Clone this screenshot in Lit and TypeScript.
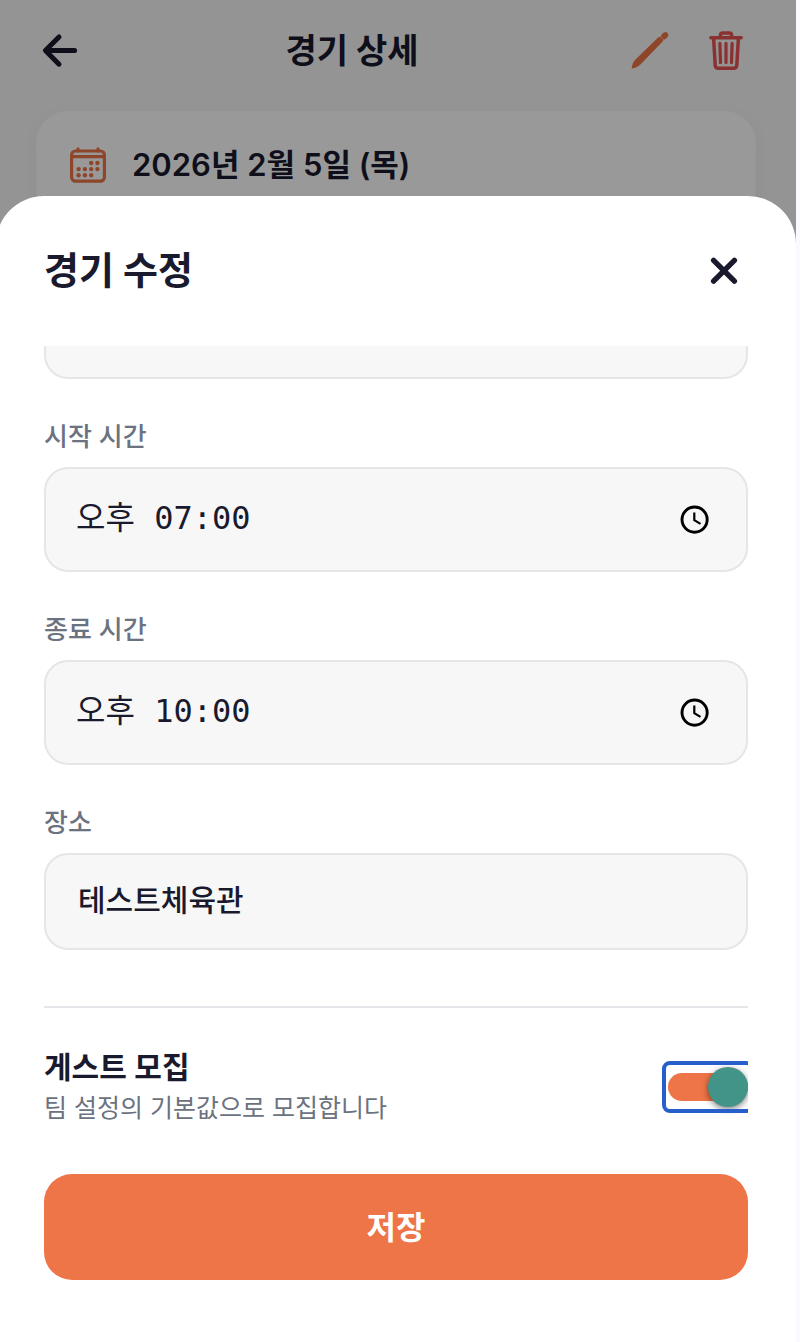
import { LitElement, html, css } from "lit";
import { customElement, query } from "lit/decorators.js";

const clock = html`<svg class="clock" viewBox="0 0 32 32" aria-hidden="true">
  <circle cx="16.6" cy="15.6" r="12.6" fill="none" stroke="#000" stroke-width="2.9" />
  <path d="M16.3 8.4v7.8l6.2 3.7" fill="none" stroke="#000" stroke-width="2.2" />
</svg>`;

@customElement("app-root")
export class AppRoot extends LitElement {
  @query(".body") private body!: HTMLElement;

  static styles = css`
    :host {
      display: block;
      height: 100vh;
      overflow: hidden;
      background: #f9f9ff;
      color: #1a1a2e;
      font-family: Inter, "Noto Sans CJK KR", sans-serif;
    }
    * {
      box-sizing: border-box;
    }
    h1,
    h2,
    p {
      margin: 0;
    }
    button {
      display: flex;
      align-items: center;
      justify-content: center;
      padding: 0;
      border: 0;
      background: none;
      color: inherit;
      font: inherit;
    }
    .shell {
      position: relative;
      height: 100%;
      margin: 0 4px 0 -4px;
      background: #f7f7f7;
    }
    .topbar {
      display: flex;
      align-items: center;
      justify-content: space-between;
      padding: 20px 40px 31px;
    }
    .topbar h1 {
      padding-top: 2px;
      font-size: 34px;
      line-height: 52px;
      font-weight: 700;
    }
    .back {
      width: 48px;
      height: 60px;
    }
    .actions {
      display: flex;
      gap: 16px;
    }
    .action {
      width: 60px;
      height: 60px;
    }
    .icon {
      display: block;
      flex: none;
      width: 40px;
      height: 40px;
    }
    .card {
      margin: 0 40px;
      padding: 32px;
      border-radius: 32px;
      background: #fff;
      box-shadow: 0 4px 16px rgba(0, 0, 0, 0.05);
    }
    .date {
      display: flex;
      align-items: center;
      gap: 24px;
      font-size: 31px;
      line-height: 44px;
      font-weight: 600;
    }
    .backdrop {
      position: absolute;
      inset: 0;
      display: flex;
      flex-direction: column;
      padding-top: 196px;
      background: rgba(0, 0, 0, 0.4);
    }
    .sheet {
      flex: 1;
      min-height: 0;
      display: flex;
      flex-direction: column;
      padding: 0 48px 62px;
      border-radius: 48px 48px 0 0;
      background: #fff;
    }
    .head {
      display: flex;
      align-items: center;
      justify-content: space-between;
      padding: 48px 0;
    }
    .head h2 {
      padding-bottom: 2px;
      font-size: 38px;
      line-height: 52px;
      font-weight: 700;
    }
    .close {
      width: 48px;
      height: 48px;
    }
    .body {
      flex: 1;
      min-height: 0;
      overflow-y: auto;
      scrollbar-width: none;
    }
    .group {
      display: flex;
      flex-direction: column;
      gap: 14px;
      margin-bottom: 40px;
    }
    .group label {
      padding-top: 2px;
      color: #6b7280;
      font-size: 26px;
      line-height: 32px;
      font-weight: 500;
    }
    .field {
      display: flex;
      align-items: center;
      height: 105px;
      padding: 0 36px 0 30px;
      border: 2px solid #e5e5ea;
      border-radius: 24px;
      background: #f7f7f7;
    }
    .field input {
      flex: 1;
      min-width: 0;
      padding: 0 0 4px;
      border: 0;
      outline: 0;
      background: none;
      color: inherit;
      font: inherit;
      font-size: 30px;
      font-weight: 500;
      line-height: 44px;
    }
    .field .time {
      font-family: "DejaVu Sans Mono", "Noto Sans CJK KR", monospace;
      font-size: 32px;
      font-weight: 400;
    }
    .place {
      height: 97px;
      padding: 0 32px;
    }
    .clock {
      flex: none;
      width: 32px;
      height: 32px;
    }
    .guest {
      display: flex;
      align-items: center;
      justify-content: space-between;
      margin: 56px 0 48px;
      padding-top: 40px;
      border-top: 2px solid #e5e5ea;
    }
    .copy {
      display: flex;
      flex-direction: column;
      gap: 4px;
    }
    .copy label {
      font-size: 30px;
      line-height: 38px;
      font-weight: 600;
    }
    .copy p {
      color: #6b7280;
      font-size: 25px;
      line-height: 36px;
    }
    .toggle {
      appearance: none;
      display: grid;
      align-items: center;
      width: 80px;
      height: 40px;
      margin: 0;
      outline: 4px solid #265fcb;
      outline-offset: 2px;
      border-radius: 2px;
    }
    .toggle::before,
    .toggle::after {
      content: "";
      grid-area: 1 / 1;
    }
    .toggle::before {
      height: 28px;
      border-radius: 14px;
      background: #ed7547;
    }
    .toggle::after {
      width: 40px;
      height: 40px;
      border-radius: 50%;
      background: #429488;
      box-shadow: 0 2px 6px rgba(0, 0, 0, 0.5);
    }
    .toggle:checked::after {
      justify-self: end;
    }
    .save {
      width: 100%;
      height: 106px;
      padding-bottom: 4px;
      border-radius: 28px;
      background: #ed7547;
      color: #fff;
      font-size: 32px;
      font-weight: 700;
    }
  `;

  firstUpdated() {
    this.body.scrollTop = this.body.scrollHeight;
  }

  private timeField(id: string, label: string, value: string) {
    return html`<div class="group">
      <label for=${id}>${label}</label>
      <div class="field">
        <input class="time" id=${id} type="text" .value=${value} />
        ${clock}
      </div>
    </div>`;
  }

  render() {
    return html`<div class="shell">
      <header class="topbar">
        <button class="back" aria-label="뒤로">
          <svg class="icon" viewBox="0 0 40 40" fill="none" stroke="currentColor" stroke-width="5" stroke-linecap="round" stroke-linejoin="round">
            <path d="M19 7 5.4 20.6 19 34.2M6 20.6h28.6" />
          </svg>
        </button>
        <h1>경기 상세</h1>
        <div class="actions">
          <button class="action" aria-label="편집">
            <svg class="icon" viewBox="0 0 40 40" fill="#ed7547">
              <path d="M28.6 7Q29.8 6.2 30.8 7.2L32.9 9.3Q33.8 10.3 32.9 11.3L10.2 34.8Q7 37.8 2.8 38.5 1.5 38.6 1.7 37.2 2.2 33 5 30.1Z" />
              <path d="M30.8 5.7 32.5 3.6Q35 .9 37.4 2.7 39.5 5 37 7.7L34.7 9.5Q33.8 9.8 33 9L31 7Q30.3 6.3 30.8 5.7Z" />
            </svg>
          </button>
          <button class="action" aria-label="삭제">
            <svg class="icon" viewBox="0 0 40 40" fill="none" stroke="#e65252" stroke-width="3.5" stroke-linecap="round" stroke-linejoin="round">
              <path d="M4.8 7.8h30.4M7.6 8l1.6 27.3q.3 3 3.2 3h15.2q2.9 0 3.2-3L32.4 8M14.5 7.5V4.9q0-2 2-2h7q2 0 2 2v2.6" />
              <path d="M20 13.4v19.2M13.9 13.4l.6 19.2M26.1 13.4l-.6 19.2" stroke-width="3.2" />
            </svg>
          </button>
        </div>
      </header>
      <section class="card">
        <div class="date">
          <svg class="icon" viewBox="0 0 40 40" fill="none" stroke="#ed7547" stroke-width="3.2" stroke-linecap="round">
            <rect x="3.6" y="6" width="32.8" height="30.2" rx="4" />
            <path d="M3.5 11.6h33M10 3.8V6M30 3.8V6" />
            <g fill="#ed7547" stroke="none">
              <circle cx="23.2" cy="18" r="2.2" /><circle cx="29.4" cy="18" r="2.2" />
              <circle cx="10.6" cy="24.1" r="2.2" /><circle cx="16.9" cy="24.1" r="2.2" />
              <circle cx="23.2" cy="24.1" r="2.2" /><circle cx="29.4" cy="24.1" r="2.2" />
              <circle cx="10.6" cy="30.3" r="2.2" /><circle cx="16.9" cy="30.3" r="2.2" />
              <circle cx="23.2" cy="30.3" r="2.2" />
            </g>
          </svg>
          <span>2026년 2월 5일 (목)</span>
        </div>
      </section>
      <div class="backdrop">
        <div class="sheet" role="dialog" aria-labelledby="title">
          <div class="head">
            <h2 id="title">경기 수정</h2>
            <button class="close" aria-label="닫기">
              <svg class="icon" viewBox="0 0 40 40" fill="none" stroke="currentColor" stroke-width="5.4" stroke-linecap="round">
                <path d="m9.6 9.4 20.8 20.8M30.4 9.4 9.6 30.2" />
              </svg>
            </button>
          </div>
          <div class="body">
            <div class="group">
              <div class="field"><input type="text" aria-label="날짜" /></div>
            </div>
            ${this.timeField("start", "시작 시간", "오후 07:00")}
            ${this.timeField("end", "종료 시간", "오후 10:00")}
            <div class="group">
              <label for="place">장소</label>
              <div class="field place">
                <input id="place" type="text" .value=${"테스트체육관"} />
              </div>
            </div>
            <div class="guest">
              <div class="copy">
                <label for="guest">게스트 모집</label>
                <p>팀 설정의 기본값으로 모집합니다</p>
              </div>
              <input class="toggle" id="guest" type="checkbox" checked />
            </div>
            <button class="save">저장</button>
          </div>
        </div>
      </div>
    </div>`;
  }
}
